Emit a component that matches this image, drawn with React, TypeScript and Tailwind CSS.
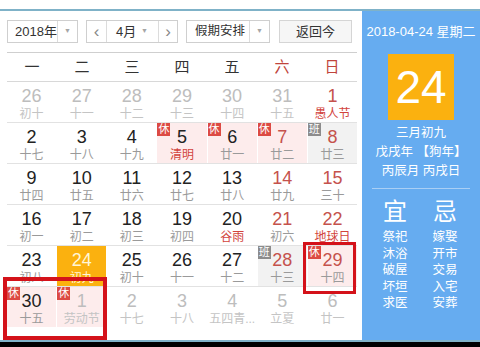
import React from 'react';

type Cell = {
  d: number;
  l: string;
  other?: boolean;
  red?: boolean;
  lred?: boolean;
  badge?: '休' | '班';
  today?: boolean;
};

const rows: Cell[][] = [
  [
    { d: 26, l: '初十', other: true },
    { d: 27, l: '十一', other: true },
    { d: 28, l: '十二', other: true },
    { d: 29, l: '十三', other: true },
    { d: 30, l: '十四', other: true },
    { d: 31, l: '十五', other: true },
    { d: 1, l: '愚人节', red: true, lred: true },
  ],
  [
    { d: 2, l: '十七' },
    { d: 3, l: '十八' },
    { d: 4, l: '十九' },
    { d: 5, l: '清明', lred: true, badge: '休' },
    { d: 6, l: '廿一', badge: '休' },
    { d: 7, l: '廿二', red: true, badge: '休' },
    { d: 8, l: '廿三', red: true, badge: '班' },
  ],
  [
    { d: 9, l: '廿四' },
    { d: 10, l: '廿五' },
    { d: 11, l: '廿六' },
    { d: 12, l: '廿七' },
    { d: 13, l: '廿八' },
    { d: 14, l: '廿九', red: true },
    { d: 15, l: '三十', red: true },
  ],
  [
    { d: 16, l: '初一' },
    { d: 17, l: '初二' },
    { d: 18, l: '初三' },
    { d: 19, l: '初四' },
    { d: 20, l: '谷雨', lred: true },
    { d: 21, l: '初六', red: true },
    { d: 22, l: '地球日', red: true, lred: true },
  ],
  [
    { d: 23, l: '初八' },
    { d: 24, l: '初九', today: true },
    { d: 25, l: '初十' },
    { d: 26, l: '十一' },
    { d: 27, l: '十二' },
    { d: 28, l: '十三', red: true, badge: '班' },
    { d: 29, l: '十四', red: true, badge: '休' },
  ],
  [
    { d: 30, l: '十五', badge: '休' },
    { d: 1, l: '劳动节', other: true, badge: '休' },
    { d: 2, l: '十七', other: true },
    { d: 3, l: '十八', other: true },
    { d: 4, l: '五四青...', other: true },
    { d: 5, l: '立夏', other: true },
    { d: 6, l: '廿一', other: true },
  ],
];

const weekdays = ['一', '二', '三', '四', '五', '六', '日'];
const yi = ['祭祀', '沐浴', '破屋', '坏垣', '求医'];
const ji = ['嫁娶', '开市', '交易', '入宅', '安葬'];

function Caret() {
  return <span className="text-[7px] text-[#a5a5a5]">▼</span>;
}

function DayCell({ c }: { c: Cell }) {
  let bg = 'bg-white';
  if (c.badge === '休') bg = 'bg-[#fdecec]';
  if (c.badge === '班') bg = 'bg-[#f2f2f2]';
  if (c.today) bg = 'bg-[#fbb10f]';

  let num = 'text-[#222]';
  if (c.red) num = 'text-[#c5524c]';
  if (c.other) num = 'text-[#bdbdbd]';
  if (c.today) num = 'text-[#fff6d8]';

  let lun = 'text-[#9a9a9a]';
  if (c.lred) lun = 'text-[#d2443c]';
  if (c.other) lun = 'text-[#c4c4c4]';
  if (c.today) lun = 'text-[#fff6d8]';

  return (
    <div className={`relative h-[40px] flex flex-col items-center ${bg}`}>
      {c.badge && (
        <span
          className={`absolute left-0 top-0 w-[13px] h-[13px] flex items-center justify-center text-[11px] leading-none text-white ${
            c.badge === '休' ? 'bg-[#dc4a43]' : 'bg-[#8c8c8c]'
          }`}
        >
          {c.badge}
        </span>
      )}
      <span className={`mt-[4px] text-[18px] leading-[20px] ${num}`}>{c.d}</span>
      <span className={`text-[12px] leading-[16px] whitespace-nowrap ${lun}`}>{c.l}</span>
    </div>
  );
}

export default function App() {
  return (
    <div className="w-[480px] h-[347px] bg-white overflow-hidden relative font-['Liberation_Sans','Noto_Sans_CJK_SC',sans-serif]">
      <div className="h-[9px]" />
      <div className="flex h-[333px] border-y-2 border-[#7fb2c8]">
        {/* calendar */}
        <div className="w-[362px] pl-[7px]">
          <div className="flex items-center mt-[9px] h-[23px] text-[13px] text-[#333] whitespace-nowrap">
            <div className="flex h-full w-[71px] border border-[#cfcfcf]">
              <span className="flex-1 pl-[7px] flex items-center">2018年</span>
              <span className="w-[20px] border-l border-[#dcdcdc] flex items-center justify-center">
                <Caret />
              </span>
            </div>
            <div className="flex h-full w-[92px] ml-[8px] border border-[#cfcfcf]">
              <span className="w-[20px] border-r border-[#dcdcdc] flex items-center justify-center text-[17px] leading-none text-[#888]">‹</span>
              <span className="flex-1 flex items-center justify-between pl-[9px] pr-[10px]">
                <span>4月</span>
                <Caret />
              </span>
              <span className="w-[19px] border-l border-[#dcdcdc] flex items-center justify-center text-[17px] leading-none text-[#888]">›</span>
            </div>
            <div className="flex h-full w-[84px] ml-[8px] border border-[#cfcfcf]">
              <span className="flex-1 pl-[8px] flex items-center text-[12.5px]">假期安排</span>
              <span className="w-[20px] border-l border-[#dcdcdc] flex items-center justify-center">
                <Caret />
              </span>
            </div>
            <div className="h-full w-[73px] ml-[9px] border border-[#d5d5d5] bg-[#f6f6f6] flex items-center justify-center">
              返回今
            </div>
          </div>
          <div className="w-[350px] mt-[9px] border-t border-[#cfcfcf]">
            <div className="grid grid-cols-7 h-[29px] items-center border-b border-[#d8d8d8] text-[15px]">
              {weekdays.map((w, i) => (
                <span key={w} className={`text-center ${i >= 5 ? 'text-[#c0443c]' : 'text-[#333]'}`}>
                  {w}
                </span>
              ))}
            </div>
            {rows.map((r, ri) => (
              <div key={ri} className={`grid grid-cols-7 gap-x-px ${ri < 5 ? 'border-b border-[#e2e2e2]' : ''}`}>
                {r.map((c, ci) => (
                  <DayCell key={ci} c={c} />
                ))}
              </div>
            ))}
          </div>
        </div>

        {/* info panel */}
        <div className="flex-1 bg-[#66acf0] text-white flex flex-col items-center">
          <div className="mt-[13px] text-[13px] leading-[16px] whitespace-nowrap">2018-04-24 星期二</div>
          <div className="mt-[14px] w-[66px] h-[66px] bg-[#fbb10f] flex items-center justify-center text-[46px] leading-none">
            24
          </div>
          <div className="mt-[3px] text-[12.5px] leading-[20px]">三月初九</div>
          <div className="text-[12.5px] leading-[19px] whitespace-nowrap">戊戌年 【狗年】</div>
          <div className="text-[12.5px] leading-[18px] whitespace-nowrap">丙辰月 丙戌日</div>
          <div className="mt-[8px] w-[98px] border-t border-[#a9cff5]" />
          <div className="grid grid-cols-2 w-[100px] mt-[9px] -ml-[2px]">
            <div className="flex flex-col items-center">
              <span className="text-[24px] leading-[28px]">宜</span>
              <div className="mt-[3px] flex flex-col items-center text-[12.5px] leading-[16.5px]">
                {yi.map((t) => (
                  <span key={t}>{t}</span>
                ))}
              </div>
            </div>
            <div className="flex flex-col items-center">
              <span className="text-[24px] leading-[28px]">忌</span>
              <div className="mt-[3px] flex flex-col items-center text-[12.5px] leading-[16.5px]">
                {ji.map((t) => (
                  <span key={t}>{t}</span>
                ))}
              </div>
            </div>
          </div>
        </div>
      </div>
      <div className="h-[5px] bg-black" />

      {/* annotation boxes */}
      <div className="absolute left-[3px] top-[277px] w-[104px] h-[63px] border-[4px] border-[#d4121a]" />
      <div className="absolute left-[303px] top-[242px] w-[53px] h-[52px] border-[3px] border-[#d4121a]" />
    </div>
  );
}
